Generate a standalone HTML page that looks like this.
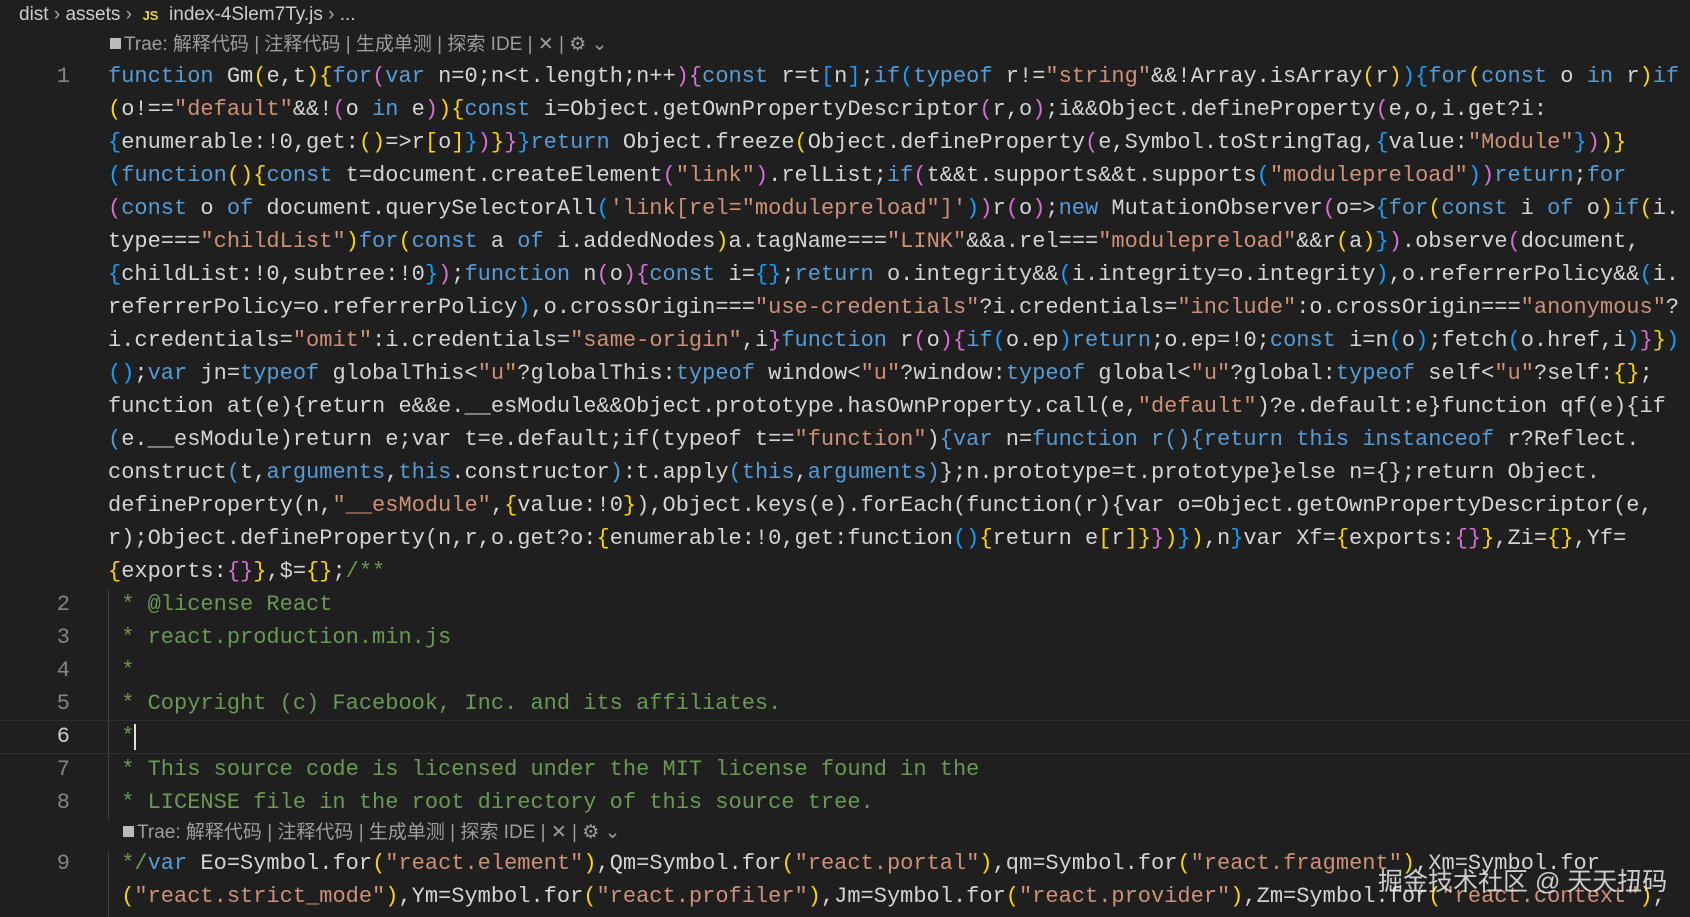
<!DOCTYPE html>
<html><head><meta charset="utf-8"><style>
body{margin:0;width:1690px;height:917px;background:#1f1f1f;overflow:hidden;position:relative;font-family:"Liberation Mono",monospace;}
.r{position:absolute;left:108px;height:33px;line-height:33px;font-size:22px;color:#d4d4d4;white-space:pre;}
.ln{position:absolute;left:0;width:70px;text-align:right;height:33px;line-height:33px;font-size:22px;color:#858585;font-family:"Liberation Mono",monospace;}
.k{color:#569cd6}.s{color:#ce9178}.y{color:#ffd700}.p{color:#da70d6}.b{color:#179fff}.c{color:#6a9955}
.lens{position:absolute;font-family:"Liberation Sans","Noto Sans CJK SC",sans-serif;font-size:19px;color:#9d9d9d;height:24px;line-height:24px;white-space:pre}
.sq{display:inline-block;width:11px;height:11px;background:#bbb;margin-right:3px;vertical-align:1px}
.guide{position:absolute;left:108px;width:1px;background:#404040}
</style></head><body>
<div style="position:absolute;left:19px;top:3px;font-family:'Liberation Sans',sans-serif;font-size:19px;color:#cccccc;line-height:24px;white-space:pre">dist <span style="color:#aaa">›</span> assets <span style="color:#aaa">›</span>  <span style="color:#e8d44d;font-weight:bold;font-size:13px">JS</span>  index-4Slem7Ty.js <span style="color:#aaa">›</span> ...</div>
<div class="lens" style="left:110px;top:33px"><span class="sq"></span>Trae: 解释代码 | 注释代码 | 生成单测 | 探索 IDE | ✕ | ⚙ ⌄</div>

<div style="position:absolute;left:0;top:720px;width:1690px;height:32px;border-top:1px solid #2e2e2e;border-bottom:1px solid #2e2e2e"></div>
<div class="guide" style="top:589px;height:231px"></div>
<div class="guide" style="top:851px;height:66px"></div>

<div class="ln" style="top:60px">1</div>
<div class="r" style="top:60px"><span class="k">function</span> Gm<span class="y">(</span>e,t<span class="y">)</span><span class="y">{</span><span class="k">for</span><span class="p">(</span><span class="k">var</span> n=0;n&lt;t.length;n++<span class="p">)</span><span class="p">{</span><span class="k">const</span> r=t<span class="b">[</span>n<span class="b">]</span>;<span class="k">if</span><span class="b">(</span><span class="k">typeof</span> r!=<span class="s">"string"</span>&amp;&amp;!Array.isArray<span class="y">(</span>r<span class="y">)</span><span class="b">)</span><span class="b">{</span><span class="k">for</span><span class="y">(</span><span class="k">const</span> o <span class="k">in</span> r<span class="y">)</span><span class="k">if</span></div>
<div class="r" style="top:93px"><span class="y">(</span>o!==<span class="s">"default"</span>&amp;&amp;!<span class="p">(</span>o <span class="k">in</span> e<span class="p">)</span><span class="y">)</span><span class="y">{</span><span class="k">const</span> i=Object.getOwnPropertyDescriptor<span class="p">(</span>r,o<span class="p">)</span>;i&amp;&amp;Object.defineProperty<span class="p">(</span>e,o,i.get?i:</div>
<div class="r" style="top:126px"><span class="b">{</span>enumerable:!0,get:<span class="y">()</span>=&gt;r<span class="y">[</span>o<span class="y">]</span><span class="b">}</span><span class="p">)</span><span class="y">}</span><span class="p">}</span><span class="b">}</span><span class="k">return</span> Object.freeze<span class="y">(</span>Object.defineProperty<span class="p">(</span>e,Symbol.toStringTag,<span class="b">{</span>value:<span class="s">"Module"</span><span class="b">}</span><span class="p">)</span><span class="y">)</span><span class="y">}</span></div>
<div class="r" style="top:159px"><span class="b">(</span><span class="k">function</span><span class="y">()</span><span class="y">{</span><span class="k">const</span> t=document.createElement<span class="p">(</span><span class="s">"link"</span><span class="p">)</span>.relList;<span class="k">if</span><span class="p">(</span>t&amp;&amp;t.supports&amp;&amp;t.supports<span class="b">(</span><span class="s">"modulepreload"</span><span class="b">)</span><span class="p">)</span><span class="k">return</span>;<span class="k">for</span></div>
<div class="r" style="top:192px"><span class="p">(</span><span class="k">const</span> o <span class="k">of</span> document.querySelectorAll<span class="b">(</span><span class="s">'link[rel="modulepreload"]'</span><span class="b">)</span><span class="p">)</span>r<span class="p">(</span>o<span class="p">)</span>;<span class="k">new</span> MutationObserver<span class="p">(</span>o=&gt;<span class="b">{</span><span class="k">for</span><span class="y">(</span><span class="k">const</span> i <span class="k">of</span> o<span class="y">)</span><span class="k">if</span><span class="y">(</span>i.</div>
<div class="r" style="top:225px">type===<span class="s">"childList"</span><span class="y">)</span><span class="k">for</span><span class="y">(</span><span class="k">const</span> a <span class="k">of</span> i.addedNodes<span class="y">)</span>a.tagName===<span class="s">"LINK"</span>&amp;&amp;a.rel===<span class="s">"modulepreload"</span>&amp;&amp;r<span class="y">(</span>a<span class="y">)</span><span class="b">}</span><span class="p">)</span>.observe<span class="p">(</span>document,</div>
<div class="r" style="top:258px"><span class="b">{</span>childList:!0,subtree:!0<span class="b">}</span><span class="p">)</span>;<span class="k">function</span> n<span class="p">(</span>o<span class="p">)</span><span class="p">{</span><span class="k">const</span> i=<span class="b">{}</span>;<span class="k">return</span> o.integrity&amp;&amp;<span class="b">(</span>i.integrity=o.integrity<span class="b">)</span>,o.referrerPolicy&amp;&amp;<span class="b">(</span>i.</div>
<div class="r" style="top:291px">referrerPolicy=o.referrerPolicy<span class="b">)</span>,o.crossOrigin===<span class="s">"use-credentials"</span>?i.credentials=<span class="s">"include"</span>:o.crossOrigin===<span class="s">"anonymous"</span>?</div>
<div class="r" style="top:324px">i.credentials=<span class="s">"omit"</span>:i.credentials=<span class="s">"same-origin"</span>,i<span class="p">}</span><span class="k">function</span> r<span class="p">(</span>o<span class="p">)</span><span class="p">{</span><span class="k">if</span><span class="b">(</span>o.ep<span class="b">)</span><span class="k">return</span>;o.ep=!0;<span class="k">const</span> i=n<span class="b">(</span>o<span class="b">)</span>;fetch<span class="b">(</span>o.href,i<span class="b">)</span><span class="p">}</span><span class="y">}</span><span class="b">)</span></div>
<div class="r" style="top:357px"><span class="b">()</span>;<span class="k">var</span> jn=<span class="k">typeof</span> globalThis&lt;<span class="s">"u"</span>?globalThis:<span class="k">typeof</span> window&lt;<span class="s">"u"</span>?window:<span class="k">typeof</span> global&lt;<span class="s">"u"</span>?global:<span class="k">typeof</span> self&lt;<span class="s">"u"</span>?self:<span class="y">{}</span>;</div>
<div class="r" style="top:390px">function at(e){return e&amp;&amp;e.__esModule&amp;&amp;Object.prototype.hasOwnProperty.call(e,<span class="s">"default"</span>)?e.default:e}function qf(e){if</div>
<div class="r" style="top:423px"><span class="k">(</span>e.__esModule)return e;var t=e.default;if(typeof t==<span class="s">"function"</span>)<span class="k">{var</span> n=<span class="k">function r(){return this instanceof</span> r?Reflect.</div>
<div class="r" style="top:456px">construct<span class="k">(</span>t,<span class="k">arguments</span>,<span class="k">this</span>.constructor<span class="k">)</span>:t.apply<span class="k">(this</span>,<span class="k">arguments)</span>};n.prototype=t.prototype}else n={};return Object.</div>
<div class="r" style="top:489px">defineProperty(n,<span class="s">"__esModule"</span>,<span class="y">{</span>value:!0<span class="y">}</span>),Object.keys(e).forEach(function(r){var o=Object.getOwnPropertyDescriptor(e,</div>
<div class="r" style="top:522px">r);Object.defineProperty(n,r,o.get?o:<span class="y">{</span>enumerable:!0,get:function<span class="b">()</span><span class="y">{</span>return e<span class="y">[</span>r<span class="y">]</span><span class="y">}</span><span class="p">}</span><span class="y">)</span><span class="b">}</span><span class="y">)</span>,n<span class="b">}</span>var Xf=<span class="y">{</span>exports:<span class="p">{}</span><span class="y">}</span>,Zi=<span class="y">{}</span>,Yf=</div>
<div class="r" style="top:555px"><span class="y">{</span>exports:<span class="p">{}</span><span class="y">}</span>,$=<span class="y">{}</span>;<span class="c">/**</span></div>

<div class="ln" style="top:588px">2</div><div class="r c" style="top:588px"> * @license React</div>
<div class="ln" style="top:621px">3</div><div class="r c" style="top:621px"> * react.production.min.js</div>
<div class="ln" style="top:654px">4</div><div class="r c" style="top:654px"> *</div>
<div class="ln" style="top:687px">5</div><div class="r c" style="top:687px"> * Copyright (c) Facebook, Inc. and its affiliates.</div>
<div class="ln" style="top:720px;color:#cccccc">6</div><div class="r c" style="top:720px"> *</div>
<div style="position:absolute;left:134px;top:724px;width:2px;height:26px;background:#e0e0e0"></div>
<div class="ln" style="top:753px">7</div><div class="r c" style="top:753px"> * This source code is licensed under the MIT license found in the</div>
<div class="ln" style="top:786px">8</div><div class="r c" style="top:786px"> * LICENSE file in the root directory of this source tree.</div>
<div class="lens" style="left:123px;top:821px"><span class="sq"></span>Trae: 解释代码 | 注释代码 | 生成单测 | 探索 IDE | ✕ | ⚙ ⌄</div>
<div class="ln" style="top:847px">9</div>
<div class="r" style="top:847px"> <span class="c">*/</span><span class="k">var</span> Eo=Symbol.for<span class="y">(</span><span class="s">"react.element"</span><span class="y">)</span>,Qm=Symbol.for<span class="y">(</span><span class="s">"react.portal"</span><span class="y">)</span>,qm=Symbol.for<span class="y">(</span><span class="s">"react.fragment"</span><span class="y">)</span>,Xm=Symbol.for</div>
<div class="r" style="top:880px"> <span class="y">(</span><span class="s">"react.strict_mode"</span><span class="y">)</span>,Ym=Symbol.for<span class="y">(</span><span class="s">"react.profiler"</span><span class="y">)</span>,Jm=Symbol.for<span class="y">(</span><span class="s">"react.provider"</span><span class="y">)</span>,Zm=Symbol.for<span class="y">(</span><span class="s">"react.context"</span><span class="y">)</span>,</div>
<div style="position:absolute;left:1378px;top:862px;font-family:'Liberation Sans','Noto Sans CJK SC',sans-serif;font-size:25px;color:rgba(235,235,235,0.85);white-space:pre">掘金技术社区 @ 天天扭码</div>
</body></html>
